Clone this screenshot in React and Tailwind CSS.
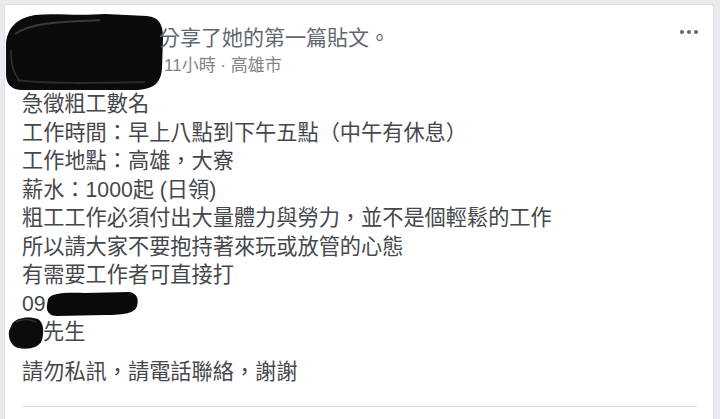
import React from "react";

const font = { fontFamily: '"Liberation Sans", "Noto Sans CJK TC", sans-serif' };

function HeaderBlob() {
  return (
    <svg width="160" height="82" viewBox="0 0 160 82" className="shrink-0">
      <path
        d="M1,34 C2,18 12,8 30,5 C50,3 70,6 100,4 L142,6 C154,7 158,14 158,28 L157,58 C156,72 150,79 132,80 L18,80 C6,80 1,74 1,64 Z"
        fill="#0b0b0b"
      />
      <path d="M10,24 C30,10 70,12 95,10" stroke="#3a3a3a" strokeWidth="2" fill="none" />
      <path d="M12,70 C40,74 90,73 140,72" stroke="#2a2a2a" strokeWidth="2" fill="none" />
      <path d="M6,40 C6,55 8,62 14,70" stroke="#333" strokeWidth="1.5" fill="none" />
    </svg>
  );
}

function PhoneBlob() {
  return (
    <svg width="94" height="26" viewBox="0 0 94 26" className="inline-block align-[-6px] -ml-[1px]">
      <path
        d="M3,8 C6,2 20,1 40,2 L84,1 C92,2 94,8 92,15 C90,22 80,24 60,24 L12,25 C4,25 1,20 2,14 Z"
        fill="#0a0a0a"
      />
    </svg>
  );
}

function NameBlob() {
  return (
    <svg width="36" height="34" viewBox="0 0 36 34" className="absolute left-[-14px] top-[-7px]">
      <path
        d="M4,8 C8,1 22,0 30,3 C36,7 36,16 34,24 C31,32 20,34 10,32 C3,30 0,22 1,15 Z"
        fill="#0c0c0c"
      />
      <path d="M8,6 C14,3 22,3 28,6" stroke="#333" strokeWidth="1.5" fill="none" />
    </svg>
  );
}

export default function App() {
  const lines = [
    "急徵粗工數名",
    "工作時間：早上八點到下午五點（中午有休息）",
    "工作地點：高雄，大寮",
    "薪水：1000起 (日領)",
    "粗工工作必須付出大量體力與勞力，並不是個輕鬆的工作",
    "所以請大家不要抱持著來玩或放管的心態",
    "有需要工作者可直接打",
  ];

  return (
    <div className="h-[419px] w-[720px] overflow-hidden bg-[#e9ebee] pt-[4px] pl-[4px] pr-[6px]" style={font}>
      <div className="h-[420px] bg-white border border-[#dddfe2] border-b-0 rounded-t-[3px]">
        <div className="flex items-start pr-[15px]">
          <div className="mt-[5px]">
            <HeaderBlob />
          </div>
          <div className="mt-[19px] -ml-[6px]">
            <div className="text-[21px] leading-[28px] text-[#606770]">分享了她的第一篇貼文。</div>
            <div className="mt-[2px] ml-[5px] text-[17px] leading-[24px] text-[#7f838b]">11小時 · 高雄市</div>
          </div>
          <div className="ml-auto mt-[25px] flex gap-[3px]">
            <span className="w-[4px] h-[4px] rounded-full bg-[#606770]" />
            <span className="w-[4px] h-[4px] rounded-full bg-[#606770]" />
            <span className="w-[4px] h-[4px] rounded-full bg-[#606770]" />
          </div>
        </div>

        <div className="pl-[17px] -mt-[2px] text-[21.2px] leading-[28.5px] text-[#45474b]">
          {lines.map((l) => (
            <div key={l}>{l}</div>
          ))}
          <div>
            09
            <PhoneBlob />
          </div>
          <div>
            <span className="relative inline-block w-[21px] h-[20px] align-middle">
              <NameBlob />
            </span>
            先生
          </div>
          <div className="mt-[11px]">請勿私訊，請電話聯絡，謝謝</div>
        </div>

        <div className="mt-[20px] ml-[17px] mr-[16px] h-px bg-[#dadde1]" />
      </div>
    </div>
  );
}
